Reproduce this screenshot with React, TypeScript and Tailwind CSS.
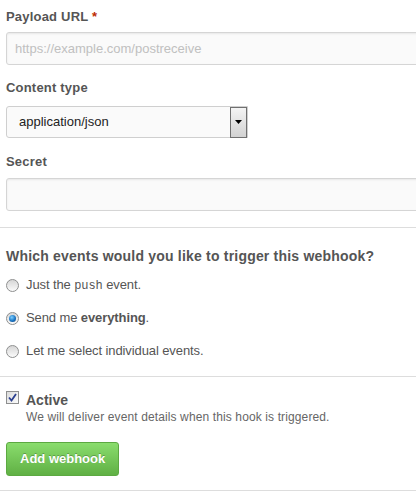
const Radio = ({ checked }: { checked?: boolean }) => (
  <span className="flex h-[13px] w-[13px] shrink-0 items-center justify-center rounded-full border border-[#8e8f8f] bg-gradient-to-b from-[#d6d6d6] to-[#fbfbfb]">
    {checked ? (
      <span className="h-[7px] w-[7px] rounded-full bg-[radial-gradient(circle_at_40%_35%,#7fd0ff,#1a75c4_55%,#0b3b73)]" />
    ) : null}
  </span>
);

const Checkbox = () => (
  <span className="flex h-[13px] w-[13px] shrink-0 items-center justify-center border border-[#8e8f8f] bg-gradient-to-br from-[#dcdcdc] to-[#fbfbfb]">
    <svg width="9" height="9" viewBox="0 0 9 9">
      <path d="M1 4.5 L3.5 7.5 L8 1" fill="none" stroke="#2b3f8f" strokeWidth="1.8" />
    </svg>
  </span>
);

const Label = ({ children }: { children: React.ReactNode }) => (
  <label className="block text-[13px] font-bold leading-[18px] tracking-[0.2px] text-[#555]">{children}</label>
);

const inputClass =
  "block h-[33px] w-[440px] rounded-[3px] border border-[#d5d5d5] bg-[#fafafa] px-[8px] text-[13px] text-[#333] shadow-[inset_0_1px_2px_rgba(0,0,0,0.075)] outline-none placeholder:text-[#c0c0c0]";

export default function App() {
  const options = [
    { id: "push", checked: false },
    { id: "all", checked: true },
    { id: "select", checked: false },
  ];

  return (
    <div className="w-[416px] overflow-hidden bg-white font-['Liberation_Sans',Arial,sans-serif] text-[13px] text-[#555]">
      <div className="px-[6px] pt-[8px]">
        <Label>
          Payload URL <span className="text-[#bd2c00]">*</span>
        </Label>
        <input className={`mt-[6px] ${inputClass}`} placeholder="https://example.com/postreceive" />

        <div className="mt-[14px]">
          <Label>Content type</Label>
          <div className="mt-[9px] flex h-[32px] w-[242px] items-center rounded-l-[3px] border border-[#cfcfcf] bg-[#fafafa]">
            <span className="flex-1 pl-[12px] text-[13px] text-[#222]">application/json</span>
            <span className="flex h-[31px] w-[17px] items-center justify-center border border-[#707070] bg-gradient-to-b from-[#f4f4f4] to-[#d2d2d2]">
              <svg width="7" height="4" viewBox="0 0 7 4">
                <path d="M0 0 H7 L3.5 4 Z" fill="#000" />
              </svg>
            </span>
          </div>
        </div>

        <div className="mt-[15px]">
          <Label>Secret</Label>
          <input className={`mt-[7px] ${inputClass}`} />
        </div>
      </div>

      <div className="mt-[16px] border-t border-[#dddddd]" />

      <div className="px-[6px]">
        <p className="mt-[19px] text-[14px] font-bold leading-[18px] tracking-[0.2px] text-[#555]">
          Which events would you like to trigger this webhook?
        </p>
        <div className="mt-[11px] flex flex-col gap-[15px]">
          {options.map((opt) => (
            <div key={opt.id} className="flex h-[18px] items-center gap-[7px] leading-[18px] tracking-[-0.1px]">
              <Radio checked={opt.checked} />
              {opt.id === "push" ? (
                <span>
                  Just the <code className="font-['Liberation_Mono',monospace] text-[12px]">push</code> event.
                </span>
              ) : opt.id === "all" ? (
                <span>
                  Send me <strong className="font-bold">everything</strong>.
                </span>
              ) : (
                <span>Let me select individual events.</span>
              )}
            </div>
          ))}
        </div>
      </div>

      <div className="mt-[16px] border-t border-[#dddddd]" />

      <div className="px-[6px]">
        <div className="mt-[14px] flex items-start gap-[7px]">
          <Checkbox />
          <div>
            <p className="text-[14px] font-bold leading-[18px] text-[#555]">Active</p>
            <p className="text-[12px] leading-[16px] tracking-[0.12px] text-[#666]">
              We will deliver event details when this hook is triggered.
            </p>
          </div>
        </div>
        <button className="mt-[17px] h-[34px] rounded-[3px] border border-[#5ca941] bg-gradient-to-b from-[#8add6d] to-[#60b044] px-[13px] text-[13px] font-bold text-white [text-shadow:0_-1px_0_rgba(0,0,0,0.25)]">
          Add webhook
        </button>
      </div>

      <div className="mt-[14px] border-t border-[#dddddd]" />
    </div>
  );
}
